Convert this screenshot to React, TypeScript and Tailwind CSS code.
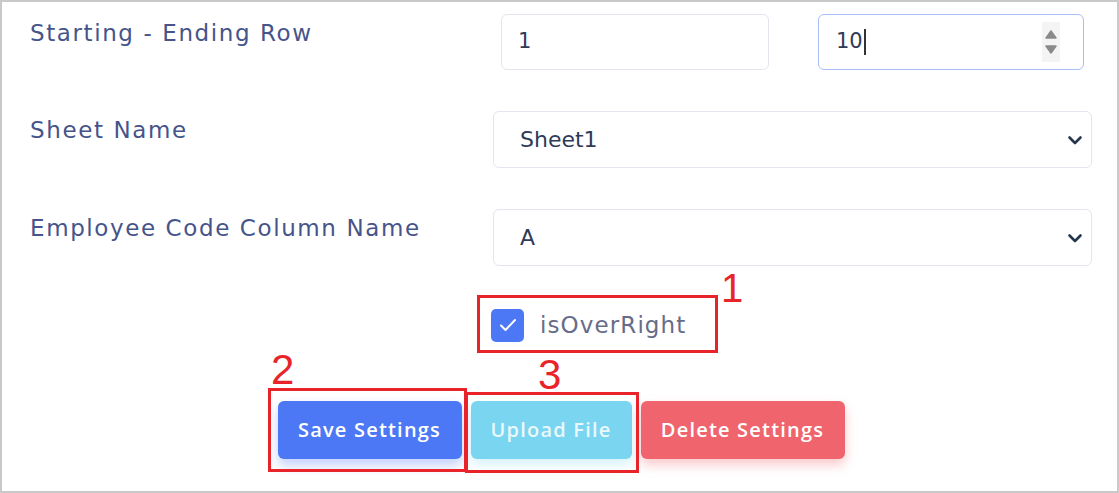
import React from "react";

const font = { fontFamily: '"DejaVu Sans", "Open Sans", sans-serif' };
const btnFont = { fontFamily: '"Open Sans", "DejaVu Sans", sans-serif' };

function Chevron() {
  return (
    <svg width="16" height="12" viewBox="0 0 16 12" className="shrink-0">
      <path d="M2.5 3.5 L8 9 L13.5 3.5" fill="none" stroke="#27364f" strokeWidth="2.6" strokeLinecap="round" strokeLinejoin="round" />
    </svg>
  );
}

function Spinner() {
  return (
    <div className="flex flex-col items-center justify-center gap-[6px] w-[18px] h-[40px] bg-[#f4f4f4]">
      <svg width="14" height="10" viewBox="0 0 14 10"><path d="M2 9 L7 2 L12 9 Z" fill="#8a8a8a" stroke="#8a8a8a" strokeWidth="1.5" strokeLinejoin="round" /></svg>
      <svg width="14" height="10" viewBox="0 0 14 10"><path d="M2 1 L7 8 L12 1 Z" fill="#8a8a8a" stroke="#8a8a8a" strokeWidth="1.5" strokeLinejoin="round" /></svg>
    </div>
  );
}

export default function App() {
  return (
    <div className="w-[1119px] h-[493px] bg-white border-2 border-[#c9c9c9] relative overflow-hidden" style={font}>
      <div className="pl-[28px] pr-[25px] pt-[12px]">
        <div className="grid grid-cols-[463px_599px] gap-y-[41px]">
          {/* Row 1 */}
          <div className="pt-[4px] text-[23px] leading-[30px] tracking-[1.6px] text-[#46548a]">Starting - Ending Row</div>
          <div className="flex h-[56px]">
            <div className="ml-[8px] w-[268px] h-[56px] rounded-[6px] border border-[#e3e6ee] flex items-center pl-[16px] text-[21px] text-[#2e3a58]">1</div>
            <div className="ml-[49px] w-[266px] h-[56px] rounded-[6px] border-[1.5px] border-[#a9bdf7] flex items-center pl-[17px] pr-[23px] text-[21px] text-[#2e3a58]">
              <span>10</span>
              <span className="inline-block w-[2px] h-[26px] bg-[#333] ml-[1px]" />
              <div className="flex-1" />
              <Spinner />
            </div>
          </div>
          {/* Row 2 */}
          <div className="pt-[4px] text-[23px] leading-[30px] tracking-[1.6px] text-[#46548a]">Sheet Name</div>
          <div className="h-[57px] rounded-[6px] border border-[#e3e6ee] flex items-center pl-[26px] pr-[8px] text-[22px] text-[#2e3a58]">
            <span className="flex-1">Sheet1</span>
            <Chevron />
          </div>
          {/* Row 3 */}
          <div className="pt-[4px] text-[23px] leading-[30px] tracking-[1.6px] text-[#46548a]">Employee Code Column Name</div>
          <div className="h-[57px] rounded-[6px] border border-[#e3e6ee] flex items-center pl-[26px] pr-[8px] text-[22px] text-[#2e3a58]">
            <span className="flex-1">A</span>
            <Chevron />
          </div>
        </div>
        {/* Checkbox row */}
        <div className="grid grid-cols-[463px_599px] mt-[42px]">
          <div />
          <div className="flex items-center -ml-[2px] gap-[16px] h-[34px]">
            <div className="w-[33px] h-[33px] rounded-[5px] bg-[#4c78f5] flex items-center justify-center">
              <svg width="18" height="14" viewBox="0 0 18 14"><path d="M2 7.5 L6.5 12 L16 2" fill="none" stroke="#fff" strokeWidth="2" strokeLinecap="round" strokeLinejoin="round" /></svg>
            </div>
            <span className="text-[23px] tracking-[1.1px] text-[#676c88]">isOverRight</span>
          </div>
        </div>
        {/* Buttons */}
        <div className="flex justify-center gap-[9px] mt-[59px]" style={btnFont}>
          <button className="w-[184px] h-[58px] rounded-[6px] bg-[#4c78f5] text-white text-[20px] font-semibold tracking-[1.2px] shadow-[0_6px_12px_rgba(76,120,245,0.35)]">Save Settings</button>
          <button className="w-[161px] h-[58px] rounded-[6px] bg-[#79d5f0] text-[#eaf8fc] text-[20px] font-semibold tracking-[1.2px] shadow-[0_6px_12px_rgba(121,213,240,0.3)]">Upload File</button>
          <button className="w-[204px] h-[58px] rounded-[6px] bg-[#f0646e] text-white text-[20px] font-semibold tracking-[1.2px] shadow-[0_6px_12px_rgba(240,100,110,0.35)]">Delete Settings</button>
        </div>
      </div>

      {/* Annotations */}
      <div className="absolute left-[475px] top-[293px] w-[241px] h-[58px] border-[3px] border-[#e8242a]" />
      <div className="absolute left-[719px] top-[266px] text-[40px] leading-[40px] text-[#e8242a]" style={{ fontFamily: '"Liberation Sans", Arial, sans-serif' }}>1</div>
      <div className="absolute left-[266px] top-[386px] w-[199px] h-[84px] border-[3px] border-[#e8242a]" />
      <div className="absolute left-[269px] top-[347px] text-[42px] leading-[42px] text-[#e8242a]" style={{ fontFamily: '"Liberation Sans", Arial, sans-serif' }}>2</div>
      <div className="absolute left-[463px] top-[390px] w-[174px] h-[81px] border-[3px] border-[#e8242a]" />
      <div className="absolute left-[536px] top-[352px] text-[42px] leading-[42px] text-[#e8242a]" style={{ fontFamily: '"Liberation Sans", Arial, sans-serif' }}>3</div>
    </div>
  );
}
